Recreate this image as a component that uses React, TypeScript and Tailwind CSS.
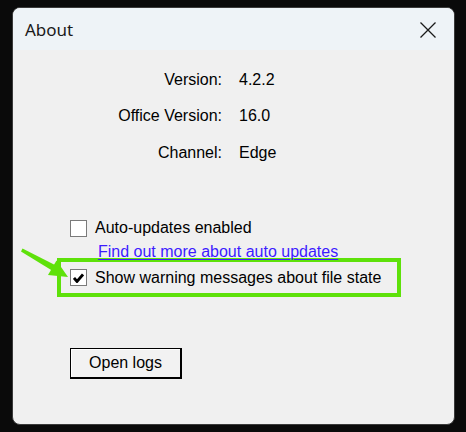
import React from 'react';

const font = { fontFamily: '"Liberation Sans", Arial, sans-serif' };

const CheckBox: React.FC<{ checked?: boolean }> = ({ checked }) => (
  <div className="w-[17px] h-[17px] shrink-0 border border-[#7a7a7a] bg-white flex items-center justify-center">
    {checked && (
      <svg width="11" height="10" viewBox="0 0 11 10">
        <path d="M1 5 L4 8.5 L10 1.5" fill="none" stroke="#000" strokeWidth="2.8" strokeLinejoin="miter" />
      </svg>
    )}
  </div>
);

const InfoRow: React.FC<{ label: string; value: string; className?: string }> = ({ label, value, className }) => (
  <div className={`flex leading-[18px] ${className ?? ''}`}>
    <div className="w-[209px] text-right">{label}</div>
    <div className="ml-[17px]">{value}</div>
  </div>
);

const App: React.FC = () => {
  return (
    <div className="w-[466px] h-[432px] bg-[#0a0a0a] pt-[7px] pl-[12px] overflow-hidden">
      <div className="relative w-[443px] h-[418px] rounded-[8px] border border-[#3a3a3a] bg-[#f0f0f0] overflow-hidden">
        {/* title bar */}
        <div className="h-[42px] bg-[#eef3f7] flex items-center justify-between pl-[12px] pr-[18px]">
          <span className="text-[17px] text-[#1a1a1a] mt-[1px]" style={{ fontFamily: '"Noto Sans", "Open Sans", sans-serif' }}>
            About
          </span>
          <svg width="16" height="16" viewBox="0 0 16 16" className="mt-[1px]">
            <path d="M0.5 0.5 L15.5 15.5 M15.5 0.5 L0.5 15.5" stroke="#1a1a1a" strokeWidth="1.3" />
          </svg>
        </div>

        {/* body */}
        <div className="text-[16px] text-black pt-[21px]" style={font}>
          <InfoRow label="Version:" value="4.2.2" />
          <InfoRow label="Office Version:" value="16.0" className="mt-[18px]" />
          <InfoRow label="Channel:" value="Edge" className="mt-[19px]" />

          <div className="flex items-center ml-[57px] mt-[57px] leading-[18px]">
            <CheckBox />
            <span className="ml-[8px]">Auto-updates enabled</span>
          </div>
          <div className="ml-[85px] mt-[6px] leading-[18px]">
            <span className="text-[#3d1cff] underline underline-offset-[2px]">Find out more about auto updates</span>
          </div>

          <div className="ml-[44px] mt-[-3px] w-[344px] h-[39px] border-4 border-[#5ee10a] flex items-center pl-[9px]">
            <CheckBox checked />
            <span className="ml-[8px] leading-[18px]">Show warning messages about file state</span>
          </div>

          <button
            className="block ml-[57px] mt-[51px] w-[112px] h-[31px] bg-[#f2f2f2] border border-black border-r-2 border-b-2 shadow-[inset_1px_1px_0_#ffffff] text-[16px] leading-[18px]"
            style={font}
          >
            Open logs
          </button>
        </div>

        {/* annotation arrow */}
        <svg className="absolute left-0 top-0 pointer-events-none" width="80" height="290" viewBox="0 0 80 290">
          <path d="M9.5 240.5 L8 243.5 L39 262.5 L42 257 Z" fill="#5ee10a" />
          <path d="M55 269 L35 267 L43.5 252.5 Z" fill="#5ee10a" />
        </svg>
      </div>
    </div>
  );
};

export default App;
